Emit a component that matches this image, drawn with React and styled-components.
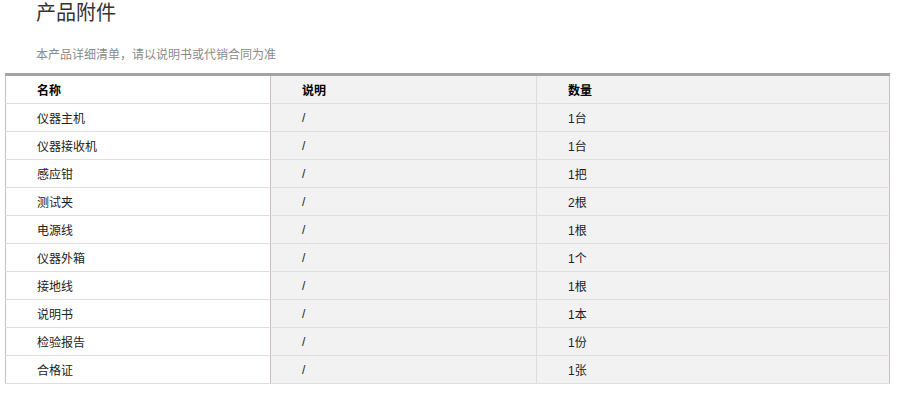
import React from 'react';
import styled, { createGlobalStyle } from 'styled-components';

const GlobalStyle = createGlobalStyle`
  body {
    margin: 0;
    background: #fff;
    font-family: "Liberation Sans", "Noto Sans CJK SC", sans-serif;
  }
`;

const Wrap = styled.div`
  padding: 0 8px 0 5px;
  width: 885px;
`;

const Title = styled.h2`
  margin: 0;
  padding: 1px 0 0 31px;
  height: 30px;
  font-size: 20px;
  font-weight: normal;
  line-height: 24px;
  color: #333;
`;

const Note = styled.p`
  margin: 14px 0 0;
  padding-left: 31px;
  height: 28px;
  font-size: 12px;
  line-height: 20px;
  color: #8a8a8a;
`;

const Table = styled.table`
  width: 885px;
  border-collapse: collapse;
  border-top: 3px solid #a3a3a3;
  border-left: 1px solid #cbbfc3;
  border-right: 1px solid #cbbfc3;
  table-layout: fixed;
  font-size: 12px;
  color: #222;
`;

const Col = styled.col`
  width: ${p => (p.$w ? `${p.$w}px` : 'auto')};
`;

const Cell = styled.td`
  height: 27px;
  padding: 0 0 0 31px;
  border-bottom: 1px solid #dedede;
  background: ${p => (p.$shaded ? '#f2f2f2' : '#fff')};
  border-right: 1px solid ${p => p.$edge || '#dedede'};
  font-weight: ${p => (p.$head ? 'bold' : 'normal')};
  color: ${p => (p.$head ? '#000' : '#222')};
  vertical-align: middle;
`;

const rows = [
  ['仪器主机', '1台'],
  ['仪器接收机', '1台'],
  ['感应钳', '1把'],
  ['测试夹', '2根'],
  ['电源线', '1根'],
  ['仪器外箱', '1个'],
  ['接地线', '1根'],
  ['说明书', '1本'],
  ['检验报告', '1份'],
  ['合格证', '1张'],
];

const Row = ({ name, desc, qty, head }) => (
  <tr>
    <Cell $head={head} $edge="#cbbfc3">{name}</Cell>
    <Cell $head={head} $shaded>{desc}</Cell>
    <Cell $head={head} $shaded $edge="#cbbfc3">{qty}</Cell>
  </tr>
);

export default function App() {
  return (
    <>
      <GlobalStyle />
      <Wrap>
        <Title>产品附件</Title>
        <Note>本产品详细清单，请以说明书或代销合同为准</Note>
        <Table>
          <colgroup>
            <Col $w={265} />
            <Col $w={266} />
            <Col />
          </colgroup>
          <tbody>
            <Row head name="名称" desc="说明" qty="数量" />
            {rows.map(([name, qty]) => (
              <Row key={name} name={name} desc="/" qty={qty} />
            ))}
          </tbody>
        </Table>
      </Wrap>
    </>
  );
}
